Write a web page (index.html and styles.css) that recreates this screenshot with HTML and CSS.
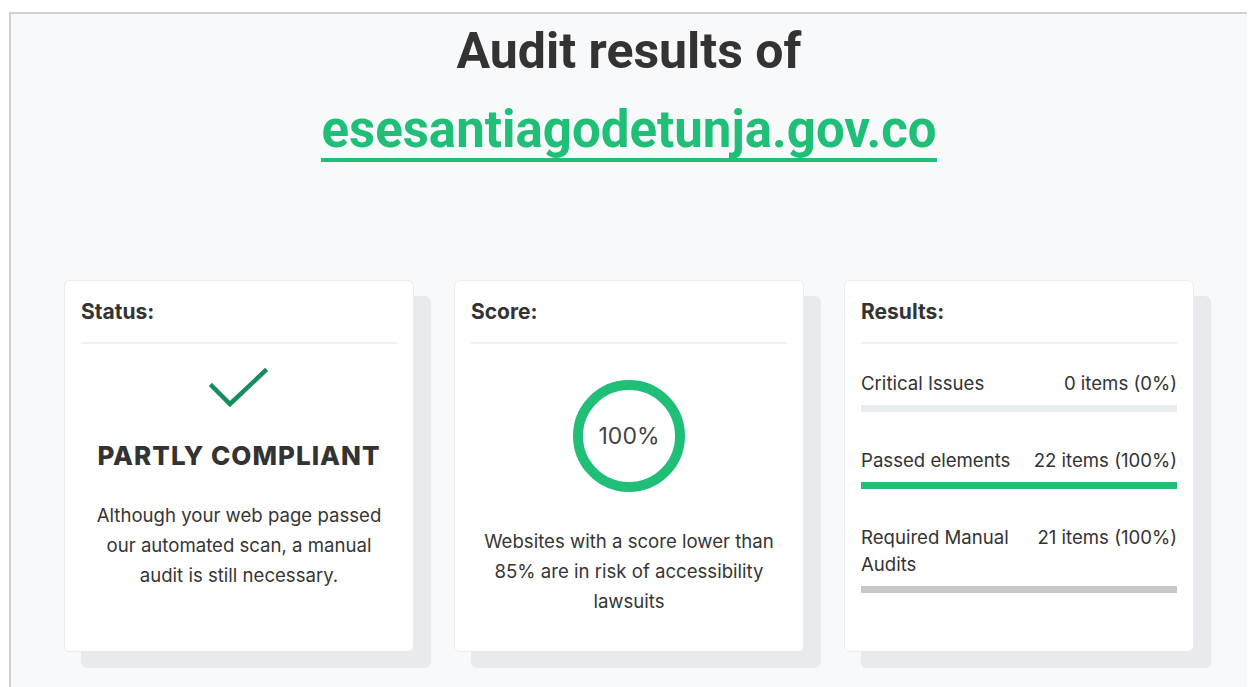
FILE: index.html
```html
<!DOCTYPE html>
<html lang="en">
<head>
<meta charset="utf-8">
<title>Audit results</title>
<link rel="stylesheet" href="styles.css">
</head>
<body>
<main class="frame">
  <header class="hero">
    <h1 class="hero-title">Audit results of</h1>
    <a class="hero-domain" href="#">esesantiagodetunja.gov.co</a>
  </header>

  <section class="cards">
    <article class="card">
      <h2 class="card-title">Status:</h2>
      <div class="card-body center">
        <svg class="check" width="60" height="44" viewBox="0 0 60 44" aria-hidden="true">
          <path d="M3 20 L21 38 L56 5" fill="none" stroke="#168d5b" stroke-width="4.5" stroke-linecap="square"/>
        </svg>
        <p class="status-label">PARTLY COMPLIANT</p>
        <p class="card-text">Although your web page passed our automated scan, a manual audit is still necessary.</p>
      </div>
    </article>

    <article class="card">
      <h2 class="card-title">Score:</h2>
      <div class="card-body center">
        <div class="score-ring">
          <svg width="112" height="112" viewBox="0 0 112 112" aria-hidden="true">
            <circle cx="56" cy="56" r="51" fill="none" stroke="#1fbf77" stroke-width="10"/>
          </svg>
          <span class="score-value">100%</span>
        </div>
        <p class="card-text score-text">Websites with a score lower than 85% are in risk of accessibility lawsuits</p>
      </div>
    </article>

    <article class="card">
      <h2 class="card-title">Results:</h2>
      <div class="card-body">
        <div class="result">
          <div class="result-row">
            <span class="result-name">Critical Issues</span>
            <span class="result-count">0 items (0%)</span>
          </div>
          <div class="bar bar-empty"></div>
        </div>
        <div class="result">
          <div class="result-row">
            <span class="result-name">Passed elements</span>
            <span class="result-count">22 items (100%)</span>
          </div>
          <div class="bar bar-pass"></div>
        </div>
        <div class="result">
          <div class="result-row">
            <span class="result-name">Required Manual Audits</span>
            <span class="result-count">21 items (100%)</span>
          </div>
          <div class="bar bar-manual"></div>
        </div>
      </div>
    </article>
  </section>
</main>
</body>
</html>
```

FILE: styles.css
```css
* {
  box-sizing: border-box;
}

html, body {
  margin: 0;
  background: #ffffff;
}

body {
  font-family: Inter, "Noto Sans", "Liberation Sans", sans-serif;
  color: #333333;
  overflow: hidden;
  height: 687px;
}

.frame {
  margin: 12px 0 0 9px;
  width: 1238px;
  min-height: 700px;
  background: #f8f9fb;
  border-top: 2px solid #d0d0d0;
  border-left: 2px solid #d0d0d0;
  padding: 9px 0 40px;
}

/* heading block */
.hero {
  display: flex;
  flex-direction: column;
  align-items: center;
}

.hero-title {
  margin: 0;
  font-family: Roboto, "Liberation Sans", sans-serif;
  font-weight: 700;
  font-size: 50px;
  line-height: 56px;
  color: #333333;
}

.hero-domain {
  margin-top: 23px;
  font-family: Roboto, "Liberation Sans", sans-serif;
  font-weight: 700;
  font-size: 51px;
  line-height: 56px;
  color: #1fbf77;
  text-decoration: none;
  border-bottom: 4px solid #1fbf77;
}

/* three cards */
.cards {
  display: flex;
  justify-content: center;
  gap: 40px;
  margin-top: 118px;
}

.card {
  flex: 0 0 350px;
  height: 372px;
  background: #ffffff;
  border: 1px solid #ececec;
  border-radius: 6px;
  box-shadow: 17px 16px 0 #e8eaed;
  padding: 17px 16px 20px;
}

.card-title {
  margin: 0;
  font-size: 21px;
  font-weight: 700;
  line-height: 28px;
  color: #333333;
  padding-bottom: 16px;
  border-bottom: 2px solid #f0f1f3;
}

.card-body {
  display: flex;
  flex-direction: column;
}

.card-body.center {
  align-items: center;
  text-align: center;
}

.check {
  display: block;
  margin-top: 22px;
}

.status-label {
  margin: 30px 0 0;
  font-size: 26px;
  font-weight: 800;
  line-height: 32px;
  letter-spacing: 1px;
  color: #333333;
}

.card-text {
  margin: 0;
  font-size: 18.6px;
  line-height: 30px;
  color: #363636;
  padding: 0 8px;
}

.status-label + .card-text {
  margin-top: 28px;
}

.score-ring {
  position: relative;
  width: 112px;
  height: 112px;
  margin-top: 36px;
}

.score-ring svg {
  display: block;
}

.score-value {
  position: absolute;
  inset: 0;
  display: flex;
  align-items: center;
  justify-content: center;
  font-size: 23px;
  color: #444444;
}

.score-text {
  margin-top: 34px;
}

/* results list */
.result {
  margin-top: 25.5px;
}

.result + .result {
  margin-top: 34.5px;
}

.result-row {
  display: flex;
  justify-content: space-between;
  gap: 20px;
  font-size: 18.6px;
  line-height: 27px;
  color: #333333;
}

.result-name {
  max-width: 160px;
}

.result-count {
  white-space: nowrap;
}

.bar {
  height: 7px;
  margin-top: 8.5px;
}

.bar-empty {
  background: #e9ecef;
}

.bar-pass {
  background: #1fbf77;
}

.bar-manual {
  background: #c8c8c8;
}
```
